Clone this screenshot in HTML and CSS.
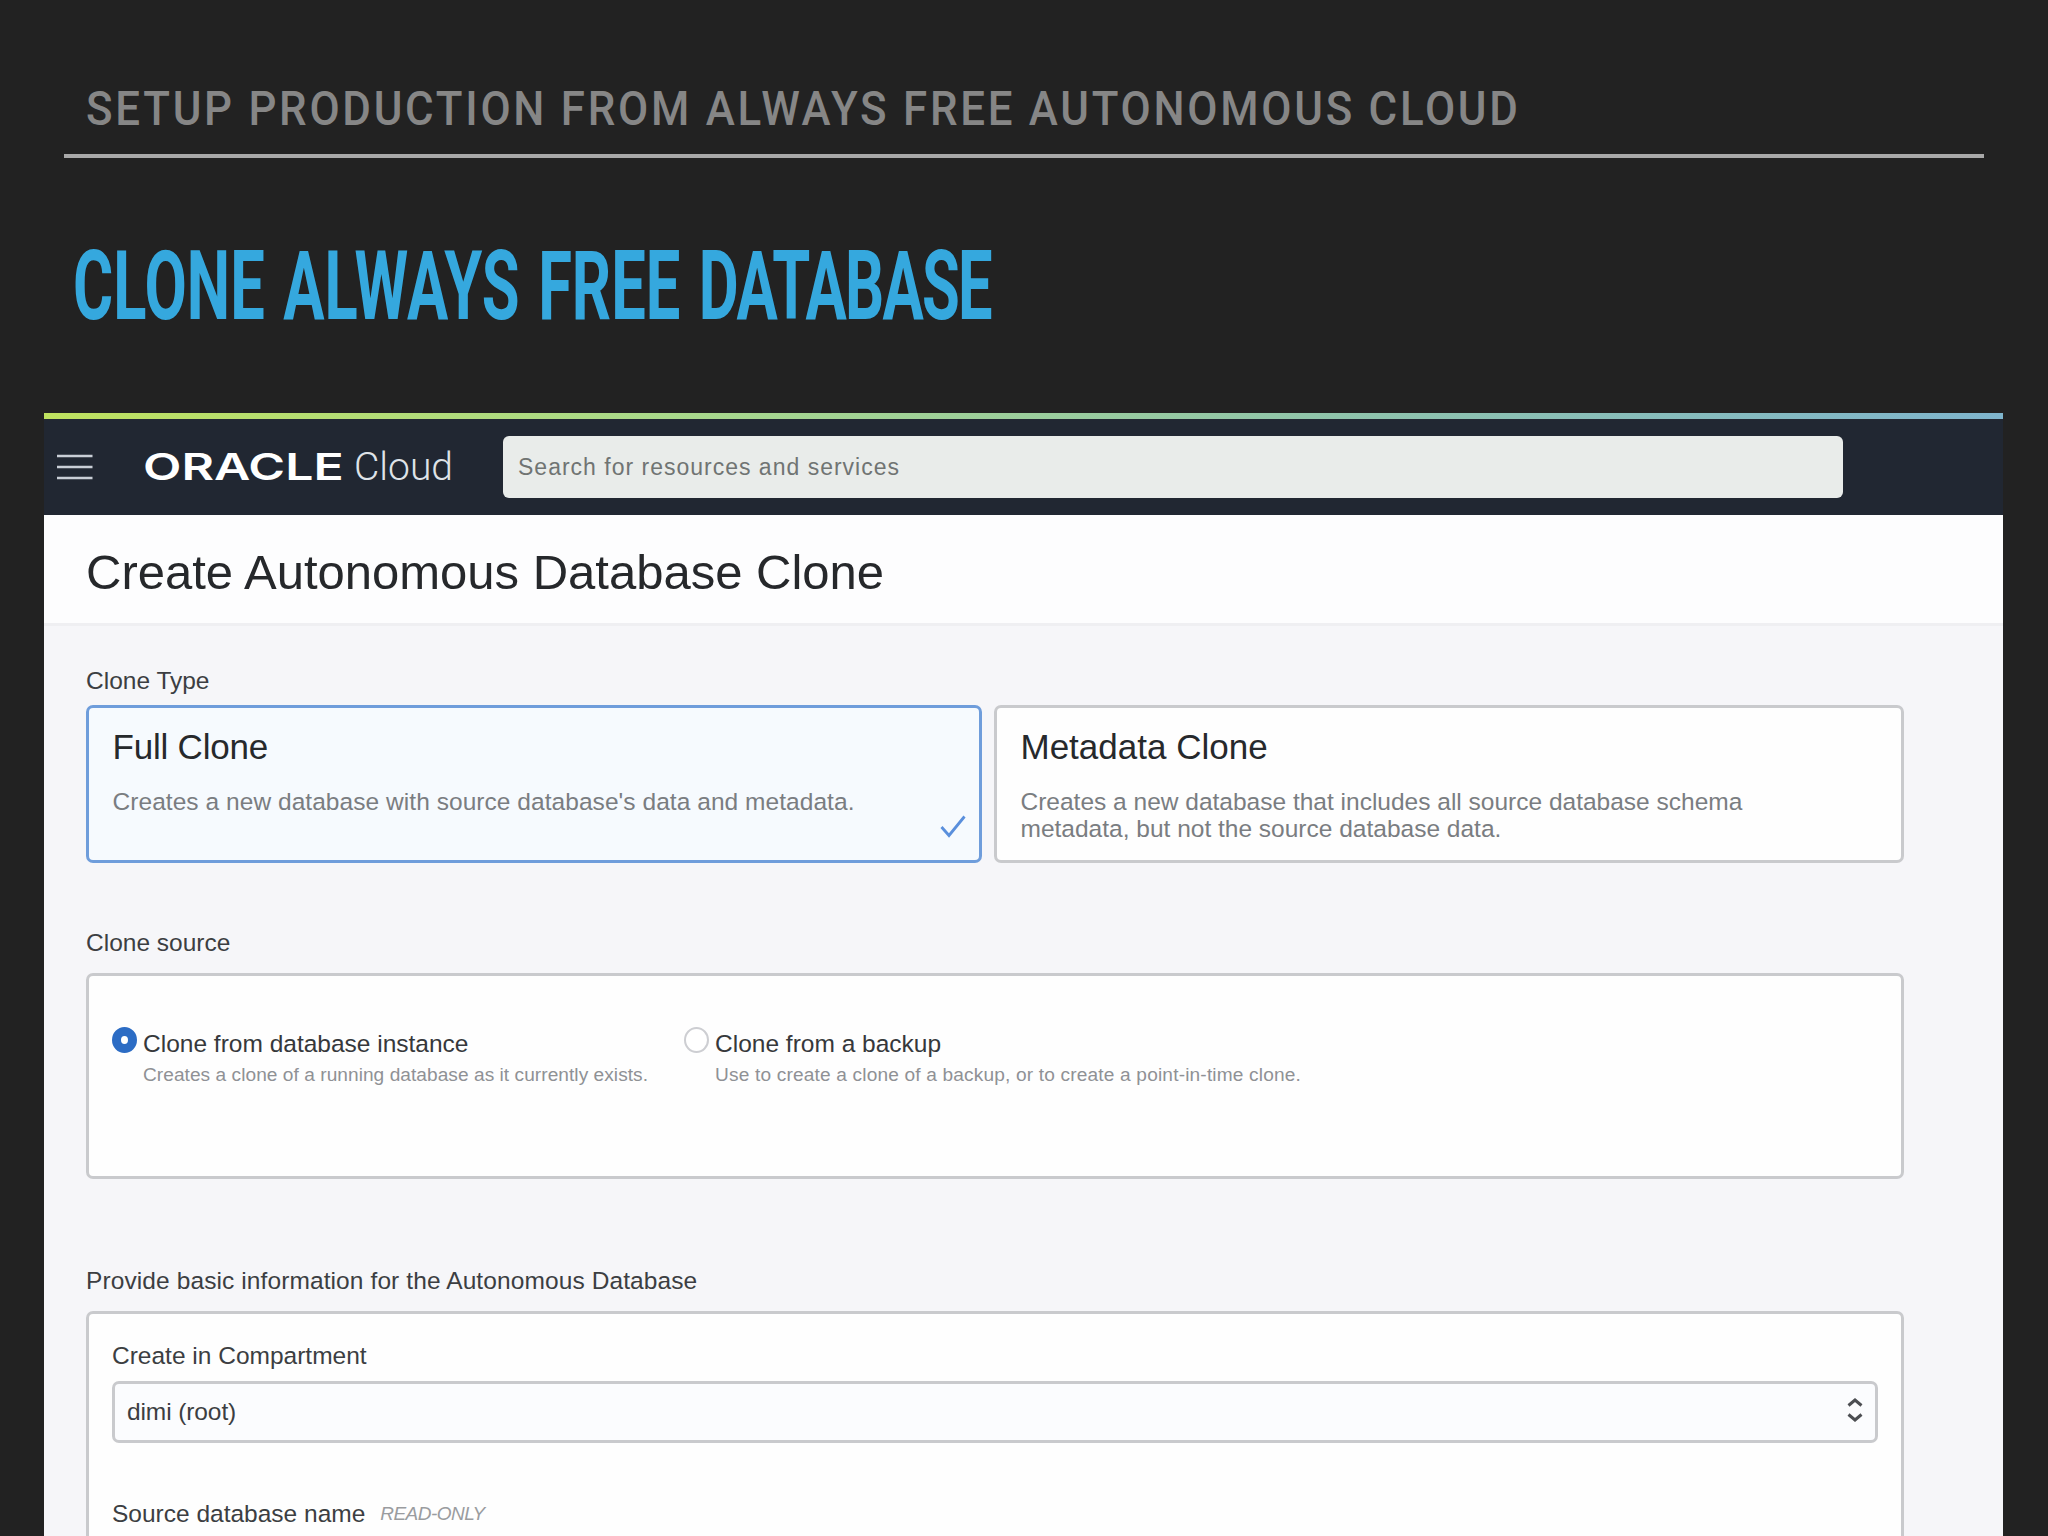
FILE: index.html
```html
<!DOCTYPE html>
<html lang="en">
<head>
<meta charset="utf-8">
<title>Clone Always Free Database</title>
<link rel="stylesheet" href="styles.css">
</head>
<body>
<main class="slide">
  <header class="slide-head">
    <p class="kicker"><span class="kicker-text">SETUP PRODUCTION FROM ALWAYS FREE AUTONOMOUS CLOUD</span></p>
    <h1 class="headline"><span class="headline-text">CLONE ALWAYS FREE <span class="tight">DATABASE</span></span></h1>
  </header>

  <section class="console">
    <nav class="topbar">
      <svg class="menu" viewBox="0 0 36 28" width="36" height="28"><path d="M0 3H35.500M0 14H35.500M0 25H35.500" stroke="#c9ced6" stroke-width="2.600"/></svg>
      <div class="brand"><span class="oracle"><span class="oracle-text">ORACLE</span></span><span class="cloud">Cloud</span></div>
      <div class="search">Search for resources and services</div>
    </nav>
    <div class="page-title">Create Autonomous Database Clone</div>

    <div class="form">
      <div class="label">Clone Type</div>
      <div class="cards">
        <article class="card selected">
          <h2>Full Clone</h2>
          <p>Creates a new database with source database's data and metadata.</p>
          <svg class="check" viewBox="0 0 26 23" width="26" height="23"><path d="M1.500 12L9 20.500L24.500 1.500" fill="none" stroke="#5a8fdc" stroke-width="2.800"/></svg>
        </article>
        <article class="card">
          <h2>Metadata Clone</h2>
          <p>Creates a new database that includes all source database schema<br>metadata, but not the source database data.</p>
        </article>
      </div>

      <div class="label label-source">Clone source</div>
      <div class="box source">
        <div class="option option-instance">
          <span class="radio on"></span>
          <div><div class="option-name">Clone from database instance</div><div class="hint">Creates a clone of a running database as it currently exists.</div></div>
        </div>
        <div class="option option-backup">
          <span class="radio"></span>
          <div><div class="option-name">Clone from a backup</div><div class="hint">Use to create a clone of a backup, or to create a point-in-time clone.</div></div>
        </div>
      </div>

      <div class="label label-basic">Provide basic information for the Autonomous Database</div>
      <div class="box basic">
        <div class="label">Create in Compartment</div>
        <div class="select"><span>dimi (root)</span>
          <svg viewBox="0 0 16 26" width="16" height="26"><path d="M1.500 8.500L8 3L14.500 8.500M1.500 17.500L8 23L14.500 17.500" fill="none" stroke="#4c4e52" stroke-width="3"/></svg>
        </div>
        <div class="label source-name">Source database name <em>READ-ONLY</em></div>
      </div>
    </div>
  </section>
</main>
</body>
</html>
```
FILE: styles.css
```css
* { box-sizing: border-box; }
body {
  margin: 0;
  background: #222222;
  font-family: "Liberation Sans", Arial, sans-serif;
}
h1, h2, p { margin: 0; font-weight: 400; }

.slide {
  width: 2048px;
  height: 1536px;
  overflow: hidden;
  display: flex;
  flex-direction: column;
}
.slide-head { height: 413px; padding: 0 64px; flex: none; }

.kicker {
  height: 158px;
  padding: 79px 0 0 22px;
  border-bottom: 4px solid #a9a9a9;
  font: 500 48px/60px Roboto, sans-serif;
  letter-spacing: 3px;
  color: #868686;
  white-space: nowrap;
}
.kicker-text, .headline-text, .oracle-text { display: inline-block; transform-origin: 0 50%; }
.kicker-text { transform: scaleX(0.913); }
.headline {
  padding: 68px 0 0 9px;
  font: 700 96px/120px Roboto, sans-serif;
  color: #35a8de;
  white-space: nowrap;
}
.headline-text { transform: scaleX(0.64); word-spacing: 5px; }
.tight { letter-spacing: -2.700px; }

.console {
  width: 1959px;
  margin-left: 44px;
  flex: 1;
  display: flex;
  flex-direction: column;
  background: #f6f6f9;
}
.topbar {
  height: 102px;
  flex: none;
  display: flex;
  align-items: center;
  padding: 6px 0 0 13px;
  background: linear-gradient(90deg, #bfe25f, #a9d98b 32%, #8fc4ab 66%, #7fb5cd) 0 0 / 100% 6px no-repeat #212732;
}
.menu { display: block; }
.brand { width: 410px; padding-left: 50px; display: flex; align-items: center; color: #fff; }
.oracle { width: 211px; font: 600 37px/46px Inter, sans-serif; }
.oracle-text { transform: scaleX(1.35); }
.cloud { font: 300 39px/46px Roboto, sans-serif; color: #dfe3e8; }
.search {
  width: 1340px;
  height: 62px;
  padding-left: 15px;
  border-radius: 6px;
  background: #e9ecea;
  color: #707473;
  font-size: 23px;
  line-height: 62px;
  letter-spacing: 1px;
}
.page-title {
  height: 111px;
  flex: none;
  padding-left: 42px;
  background: #fdfdfe;
  border-bottom: 3px solid #efeff2;
  color: #26282b;
  font-size: 49px;
  line-height: 114px;
}

.form { padding: 41px 99px 0 42px; color: #3c3e42; font-size: 24.5px; }
.label { line-height: 28px; white-space: nowrap; }
.cards { display: flex; gap: 12px; margin-top: 10px; }
.card {
  position: relative;
  width: 910px;
  height: 158px;
  padding: 17px 23.500px;
  border: 3px solid #c9cacd;
  border-radius: 7px;
  background: #fefefe;
}
.card.selected { width: 896px; background: #f6fafe; border-color: #6f9ddb; }
.card.selected h2 { letter-spacing: -0.200px; }
.card h2 { font-size: 35px; line-height: 44px; color: #26292c; margin-bottom: 19px; }
.card p { line-height: 27px; color: #7a7d81; white-space: nowrap; }
.card.selected p { letter-spacing: 0.050px; }
.check { position: absolute; right: 13px; bottom: 22px; }

.box { border: 3px solid #c9cacd; border-radius: 7px; background: #fefefe; }
.label-source { margin-top: 66px; }
.source { height: 206px; margin-top: 16px; padding: 51px 23px; display: flex; }
.option { display: flex; gap: 6px; white-space: nowrap; }
.option-instance { width: 572px; }
.option-backup .hint { letter-spacing: 0.170px; }
.radio {
  width: 25px;
  height: 26px;
  flex: none;
  border-radius: 50%;
  border: 2.500px solid #cdced2;
  background: #fff;
}
.radio.on { border: 9px solid #2c6cc4; }
.option-name { margin-top: 3px; line-height: 28px; color: #36383b; }
.hint { margin-top: 5px; font-size: 19.100px; line-height: 24px; color: #8f9195; letter-spacing: 0.050px; }

.label-basic { margin-top: 88px; letter-spacing: 0.100px; }
.basic { height: 300px; margin-top: 16px; padding: 28px 23px; }
.select {
  height: 62px;
  margin-top: 11px;
  padding: 0 12px 0 12px;
  border: 3px solid #c9cacd;
  border-radius: 7px;
  background: #fbfcfe;
  display: flex;
  align-items: center;
  justify-content: space-between;
}
.select span { letter-spacing: -0.100px; }
.select svg { margin-bottom: 4px; }
.source-name { margin-top: 57px; }
.source-name em {
  display: inline-block;
  margin-left: 8px;
  transform: translateY(-2px);
  font-size: 19px;
  letter-spacing: -0.500px;
  color: #9a9c9f;
}
```
